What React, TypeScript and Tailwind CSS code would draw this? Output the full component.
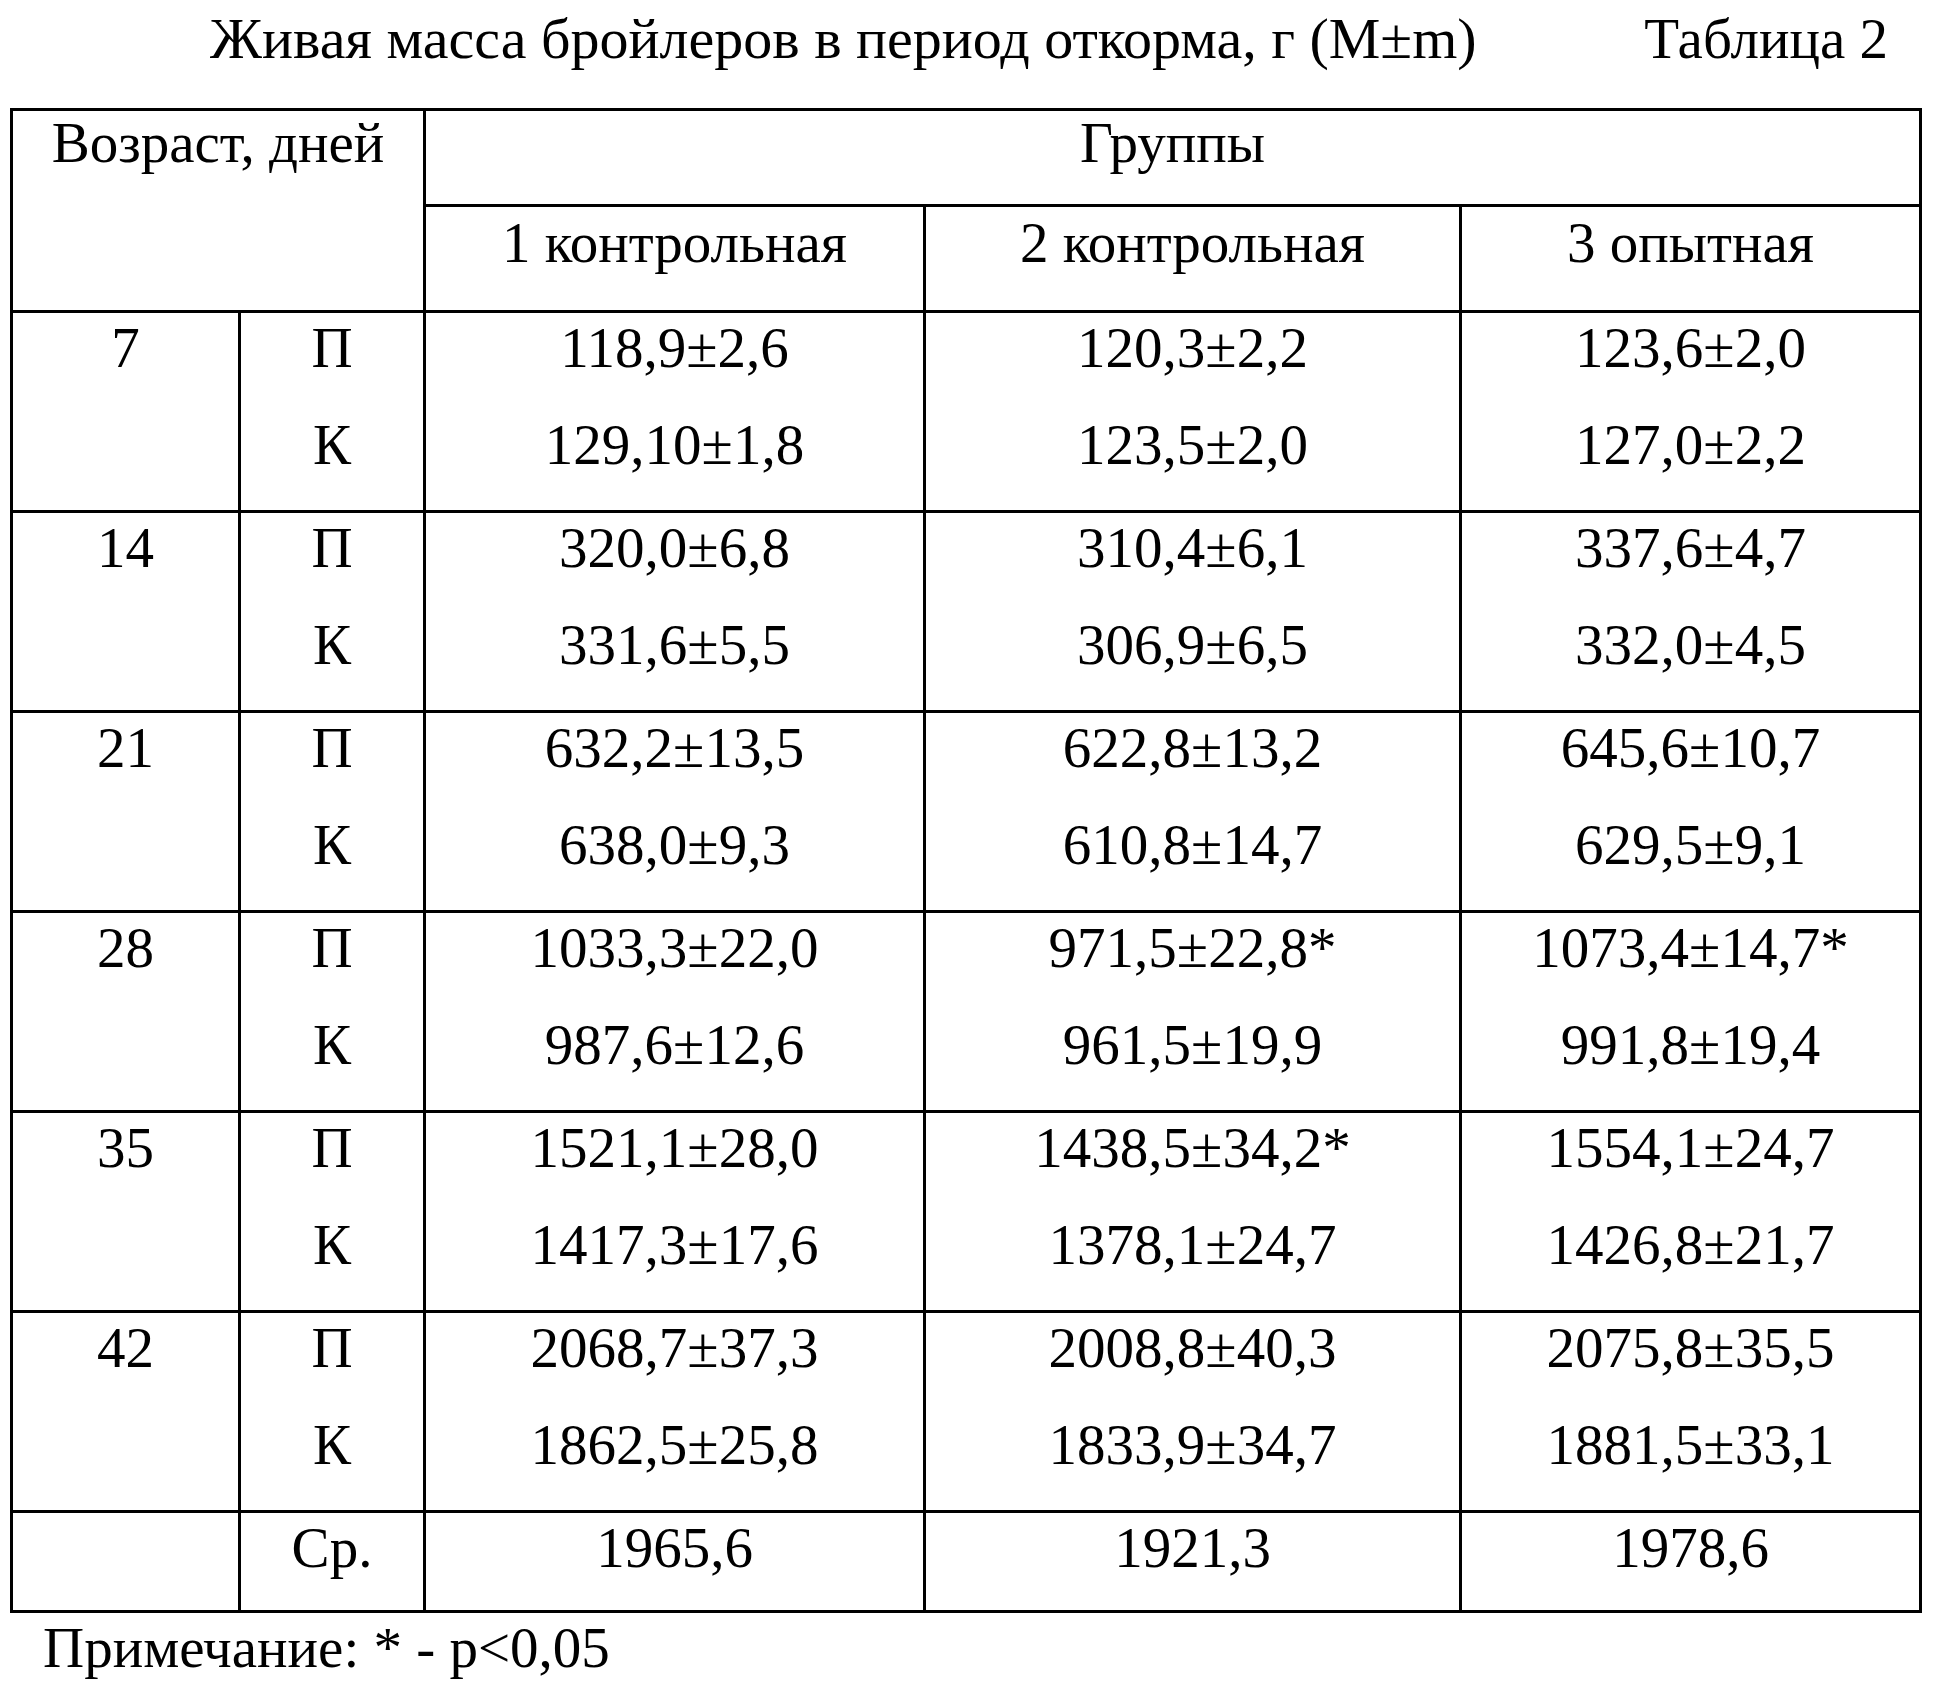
const rows = [
  { age: '7', p: '118,9±2,6', k: '129,10±1,8', p2: '120,3±2,2', k2: '123,5±2,0', p3: '123,6±2,0', k3: '127,0±2,2' },
  { age: '14', p: '320,0±6,8', k: '331,6±5,5', p2: '310,4±6,1', k2: '306,9±6,5', p3: '337,6±4,7', k3: '332,0±4,5' },
  { age: '21', p: '632,2±13,5', k: '638,0±9,3', p2: '622,8±13,2', k2: '610,8±14,7', p3: '645,6±10,7', k3: '629,5±9,1' },
  { age: '28', p: '1033,3±22,0', k: '987,6±12,6', p2: '971,5±22,8*', k2: '961,5±19,9', p3: '1073,4±14,7*', k3: '991,8±19,4' },
  { age: '35', p: '1521,1±28,0', k: '1417,3±17,6', p2: '1438,5±34,2*', k2: '1378,1±24,7', p3: '1554,1±24,7', k3: '1426,8±21,7' },
  { age: '42', p: '2068,7±37,3', k: '1862,5±25,8', p2: '2008,8±40,3', k2: '1833,9±34,7', p3: '2075,8±35,5', k3: '1881,5±33,1' },
];

const cell = 'border-[3px] border-black align-top text-center p-0';

function Pair({ top, bottom }: { top: string; bottom: string }) {
  return (
    <div className="pt-[6px]">
      <div className="leading-none">{top}</div>
      <div className="mt-[40px] leading-none">{bottom}</div>
    </div>
  );
}

export default function App() {
  return (
    <div className="w-[1935px] h-[1704px] bg-white text-black font-['Liberation_Serif','Times_New_Roman',serif] text-[57px]">
      {/* Title */}
      <div className="flex justify-between pt-[10px] pl-[210px] pr-[47px] leading-none">
        <span className="text-[58px]">Живая масса бройлеров в период откорма, г (M±m)</span>
        <span>Таблица 2</span>
      </div>

      <table className="mt-[40px] ml-[10px] w-[1909px] table-fixed border-collapse">
        <colgroup>
          <col className="w-[228px]" />
          <col className="w-[185px]" />
          <col className="w-[500px]" />
          <col className="w-[536px]" />
          <col className="w-[460px]" />
        </colgroup>
        <tbody>
          <tr className="h-[96px]">
            <td colSpan={2} rowSpan={2} className={cell}>
              <div className="pt-[3px] leading-none">Возраст, дней</div>
            </td>
            <td colSpan={3} className={cell}>
              <div className="pt-[3px] leading-none">Группы</div>
            </td>
          </tr>
          <tr className="h-[106px]">
            <td className={cell}>
              <div className="pt-[7px] leading-none">1 контрольная</div>
            </td>
            <td className={cell}>
              <div className="pt-[7px] leading-none">2 контрольная</div>
            </td>
            <td className={cell}>
              <div className="pt-[7px] leading-none">3 опытная</div>
            </td>
          </tr>

          {rows.map((r) => (
            <tr key={r.age} className="h-[200px]">
              <td className={cell}>
                <div className="pt-[6px] leading-none">{r.age}</div>
              </td>
              <td className={cell}>
                <Pair top="П" bottom="К" />
              </td>
              <td className={cell}>
                <Pair top={r.p} bottom={r.k} />
              </td>
              <td className={cell}>
                <Pair top={r.p2} bottom={r.k2} />
              </td>
              <td className={cell}>
                <Pair top={r.p3} bottom={r.k3} />
              </td>
            </tr>
          ))}

          <tr className="h-[100px]">
            <td className={cell}></td>
            <td className={cell}>
              <div className="pt-[6px] leading-none">Ср.</div>
            </td>
            <td className={cell}>
              <div className="pt-[6px] leading-none">1965,6</div>
            </td>
            <td className={cell}>
              <div className="pt-[6px] leading-none">1921,3</div>
            </td>
            <td className={cell}>
              <div className="pt-[6px] leading-none">1978,6</div>
            </td>
          </tr>
        </tbody>
      </table>

      {/* Note */}
      <div className="pl-[43px] pt-[6px] leading-none">Примечание: * - p&lt;0,05</div>
    </div>
  );
}
